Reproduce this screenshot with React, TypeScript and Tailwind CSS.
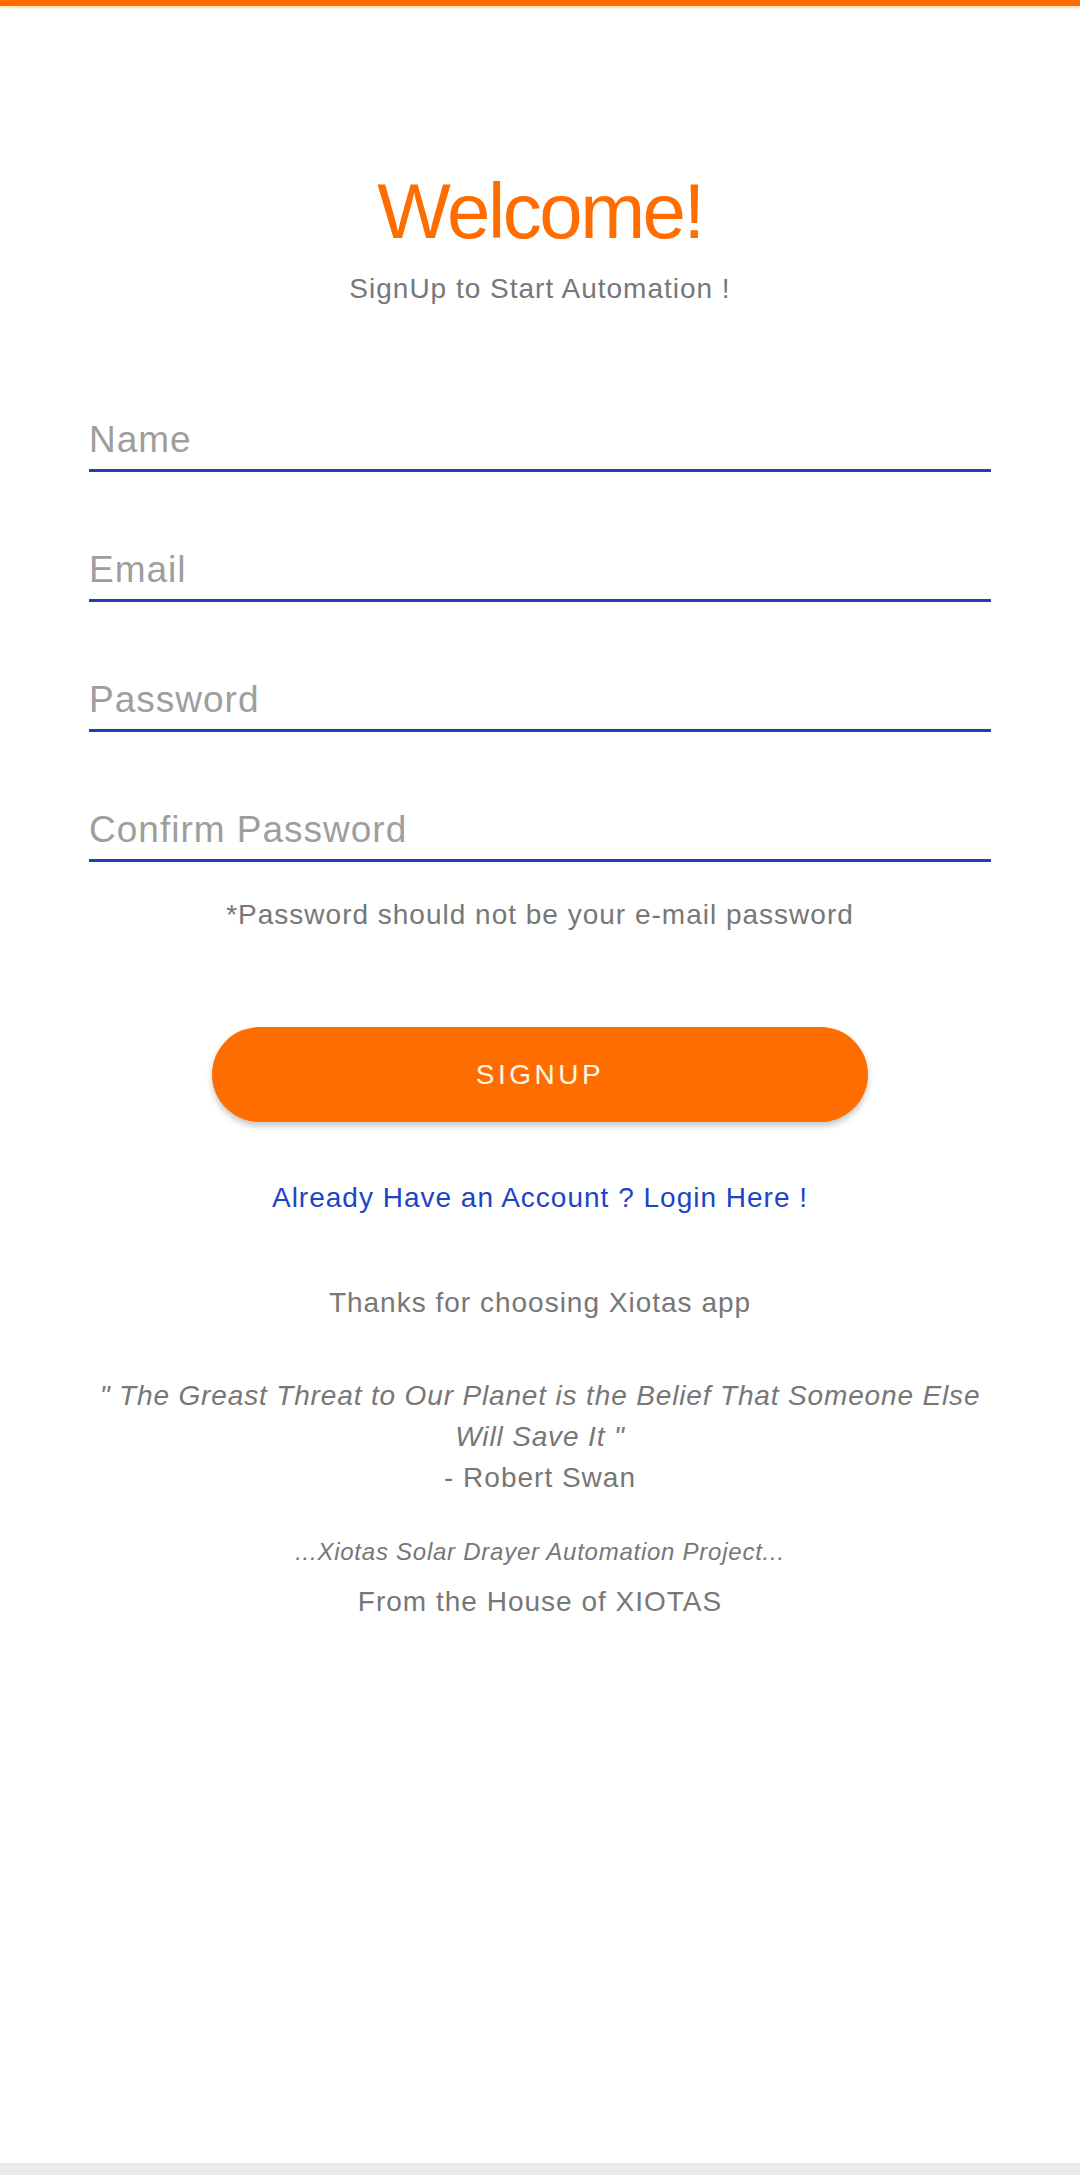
import React from "react";

const font = { fontFamily: '"Liberation Sans", Arial, sans-serif' };

function Field({ label, type = "text" }: { label: string; type?: string }) {
  return (
    <div className="border-b-[3px] border-[#1b3fbd] pb-[7px]">
      <input
        type={type}
        placeholder={label}
        className="block w-full h-[44px] leading-[44px] text-[37px] tracking-[1px] text-[#555] placeholder:text-[#9e9e9e] bg-transparent outline-none p-0"
        style={font}
      />
    </div>
  );
}

export default function App() {
  return (
    <div className="h-[2175px] w-full flex flex-col bg-white" style={font}>
      <div className="h-[6px] bg-[#ff6d00] shadow-[0_2px_3px_rgba(255,160,60,0.35)]" />
      <div className="flex-1 flex flex-col items-center">
        <h1 className="mt-[165px] h-[80px] leading-[80px] text-[78px] tracking-[-2.5px] text-[#ff6d00] font-normal">
          Welcome!
        </h1>
        <p className="mt-[22px] h-[32px] leading-[32px] text-[28px] tracking-[1px] text-[#777]">
          SignUp to Start Automation !
        </p>
        <form className="w-full px-[89px] flex flex-col gap-[76px] mt-[113px]">
          <Field label="Name" />
          <Field label="Email" type="email" />
          <Field label="Password" type="password" />
          <Field label="Confirm Password" type="password" />
        </form>
        <p className="mt-[37px] h-[32px] leading-[32px] text-[28px] tracking-[1px] text-[#777]">
          *Password should not be your e-mail password
        </p>
        <button
          type="button"
          className="mt-[96px] w-[656px] h-[95px] rounded-full bg-[#ff6d00] text-[#fff7e3] text-[28px] tracking-[3.5px] shadow-[0_4px_6px_rgba(0,0,0,0.22)]"
          style={font}
        >
          SIGNUP
        </button>
        <a className="mt-[60px] h-[32px] leading-[32px] text-[28px] tracking-[1px] text-[#1c45c6]" href="#">
          Already Have an Account ? Login Here !
        </a>
        <p className="mt-[73px] h-[32px] leading-[32px] text-[28px] tracking-[1px] text-[#777]">
          Thanks for choosing Xiotas app
        </p>
        <div className="mt-[56px] w-full px-[80px] text-center leading-[41px] text-[28px] tracking-[1px] text-[#777]">
          <p className="italic tracking-[0.85px]">" The Greast Threat to Our Planet is the Belief That Someone Else Will Save It "</p>
          <p>- Robert Swan</p>
        </div>
        <p className="mt-[40px] h-[28px] leading-[28px] text-[24px] tracking-[0.75px] italic text-[#777]">
          ...Xiotas Solar Drayer Automation Project...
        </p>
        <p className="mt-[20px] h-[32px] leading-[32px] text-[28px] tracking-[1px] text-[#777]">
          From the House of XIOTAS
        </p>
      </div>
      <div className="h-[12px] bg-[#ebebeb]" />
    </div>
  );
}
